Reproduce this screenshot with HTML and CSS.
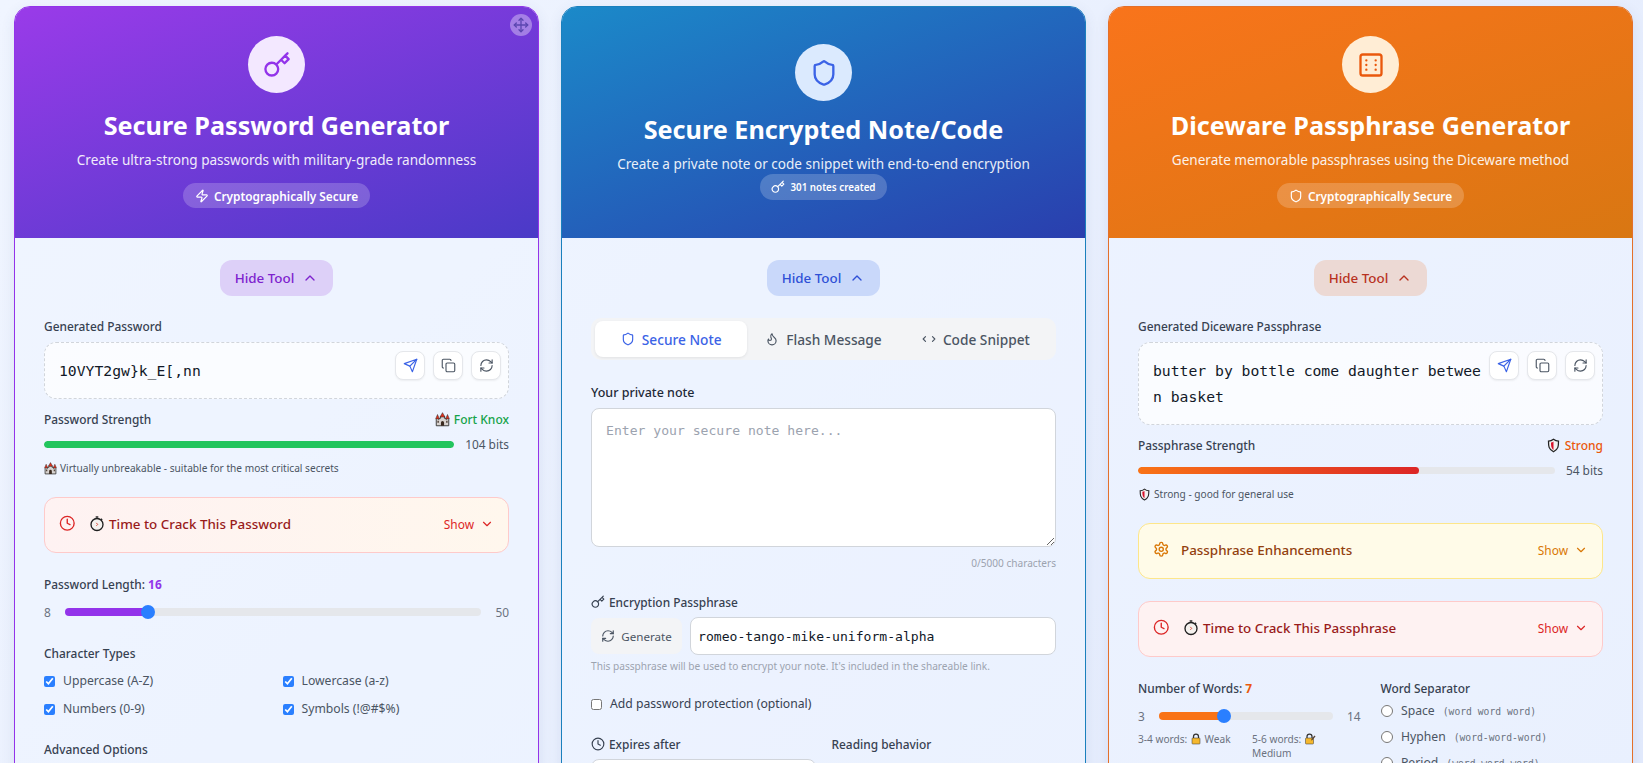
FILE: index.html
```html
<!DOCTYPE html>
<html lang="en">
  <head>
    <meta charset="UTF-8" />
    <meta name="viewport" content="width=device-width, initial-scale=1.0" />
    <title>Security Tools</title>
    <link rel="stylesheet" href="styles.css">
  </head>
  <body>
    <svg class="icon-sprite" aria-hidden="true">
      <symbol id="i-key" viewBox="0 0 24 24"><path d="m21 2-2 2m-7.61 7.61a5.5 5.5 0 1 1-7.778 7.778 5.5 5.5 0 0 1 7.777-7.777zm0 0L15.5 7.5m0 0 3 3L22 7l-3-3m-3.5 3.5L19 4"/></symbol>
      <symbol id="i-shield" viewBox="0 0 24 24"><path d="M20 13c0 5-3.5 7.5-7.66 8.95a1 1 0 0 1-.67-.01C7.5 20.5 4 18 4 13V6a1 1 0 0 1 1-1c2 0 4.5-1.2 6.24-2.72a1.17 1.17 0 0 1 1.52 0C14.51 3.81 17 5 19 5a1 1 0 0 1 1 1z"/></symbol>
      <symbol id="i-zap" viewBox="0 0 24 24"><path d="M4 14a1 1 0 0 1-.78-1.63l9.9-10.2a.5.5 0 0 1 .86.46l-1.92 6.02A1 1 0 0 0 13 10h7a1 1 0 0 1 .78 1.63l-9.9 10.2a.5.5 0 0 1-.86-.46l1.92-6.02A1 1 0 0 0 11 14z"/></symbol>
      <symbol id="i-dice" viewBox="0 0 24 24"><rect width="18" height="18" x="3" y="3" rx="2"/><path d="M16 8h.01M16 12h.01M16 16h.01M8 8h.01M8 12h.01M8 16h.01"/></symbol>
      <symbol id="i-move" viewBox="0 0 24 24"><polyline points="5 9 2 12 5 15"/><polyline points="9 5 12 2 15 5"/><polyline points="15 19 12 22 9 19"/><polyline points="19 9 22 12 19 15"/><line x1="2" x2="22" y1="12" y2="12"/><line x1="12" x2="12" y1="2" y2="22"/></symbol>
      <symbol id="i-send" viewBox="0 0 24 24"><path d="m22 2-7 20-4-9-9-4z"/><path d="M22 2 11 13"/></symbol>
      <symbol id="i-copy" viewBox="0 0 24 24"><rect width="14" height="14" x="8" y="8" rx="2"/><path d="M4 16c-1.1 0-2-.9-2-2V4c0-1.1.9-2 2-2h10c1.1 0 2 .9 2 2"/></symbol>
      <symbol id="i-refresh" viewBox="0 0 24 24"><path d="M3 12a9 9 0 0 1 9-9 9.75 9.75 0 0 1 6.74 2.74L21 8"/><path d="M21 3v5h-5"/><path d="M21 12a9 9 0 0 1-9 9 9.75 9.75 0 0 1-6.74-2.74L3 16"/><path d="M8 16H3v5"/></symbol>
      <symbol id="i-clock" viewBox="0 0 24 24"><circle cx="12" cy="12" r="10"/><polyline points="12 6 12 12 16 14"/></symbol>
      <symbol id="i-up" viewBox="0 0 24 24"><path d="m18 15-6-6-6 6"/></symbol>
      <symbol id="i-down" viewBox="0 0 24 24"><path d="m6 9 6 6 6-6"/></symbol>
      <symbol id="i-flame" viewBox="0 0 24 24"><path d="M8.5 14.5A2.5 2.5 0 0 0 11 12c0-1.38-.5-2-1-3-1.072-2.143-.224-4.054 2-6 .5 2.5 2 4.9 4 6.5 2 1.6 3 3.5 3 5.5a7 7 0 1 1-14 0c0-1.153.433-2.294 1-3a2.5 2.5 0 0 0 2.5 2.5z"/></symbol>
      <symbol id="i-code" viewBox="0 0 24 24"><path d="m18 16 4-4-4-4"/><path d="m6 8-4 4 4 4"/></symbol>
      <symbol id="i-gear" viewBox="0 0 24 24"><path d="M12.22 2h-.44a2 2 0 0 0-2 2v.18a2 2 0 0 1-1 1.73l-.43.25a2 2 0 0 1-2 0l-.15-.08a2 2 0 0 0-2.73.73l-.22.38a2 2 0 0 0 .73 2.73l.15.1a2 2 0 0 1 1 1.72v.51a2 2 0 0 1-1 1.74l-.15.09a2 2 0 0 0-.73 2.73l.22.38a2 2 0 0 0 2.73.73l.15-.08a2 2 0 0 1 2 0l.43.25a2 2 0 0 1 1 1.73V20a2 2 0 0 0 2 2h.44a2 2 0 0 0 2-2v-.18a2 2 0 0 1 1-1.73l.43-.25a2 2 0 0 1 2 0l.15.08a2 2 0 0 0 2.73-.73l.22-.39a2 2 0 0 0-.73-2.73l-.15-.08a2 2 0 0 1-1-1.74v-.5a2 2 0 0 1 1-1.74l.15-.09a2 2 0 0 0 .73-2.73l-.22-.38a2 2 0 0 0-2.73-.73l-.15.08a2 2 0 0 1-2 0l-.43-.25a2 2 0 0 1-1-1.73V4a2 2 0 0 0-2-2z"/><circle cx="12" cy="12" r="3"/></symbol>

      <!-- emoji have no font here, so they are small drawings -->
      <symbol id="e-castle" viewBox="0 0 24 24">
        <path fill="#d8d3d0" stroke="#2b2b2b" stroke-width="1.4" d="M2 22V12l2-2 2 2v-2h3V7h6v3h3v2l2-2 2 2v10z"/>
        <path fill="#e0301c" stroke="#2b2b2b" stroke-width=".8" d="M12 1l4 7H8zM4 4l3 7H1zM20 4l3 7h-6z"/>
        <path fill="#3a2a20" d="M9.5 22v-5a2.5 2.5 0 0 1 5 0v5zM4 14h2v3H4zM18 14h2v3h-2z"/>
      </symbol>
      <symbol id="e-watch" viewBox="0 0 24 24">
        <path fill="#2b2b2b" d="M10 1h4v2.5h-4zM18.5 4l2 2-1.5 1.5-2-2z"/>
        <circle cx="12" cy="13.5" r="9" fill="#f4f1ee" stroke="#1f1f1f" stroke-width="2"/>
        <path fill="none" stroke="#d8321e" stroke-width="1.3" d="M11 11l2 2.5-2 2"/>
      </symbol>
      <symbol id="e-shield" viewBox="0 0 24 24">
        <path fill="#f2f2f2" stroke="#222" stroke-width="2" d="M12 2c2.5 2 5 3 8 3 0 8 0 13-8 17C4 18 4 13 4 5c3 0 5.5-1 8-3z"/>
        <path fill="#d9122a" d="M8 7c1.5 0 3-.7 4-1.5V19c-3-2.5-4-5-4-12z"/>
      </symbol>
      <symbol id="e-lock" viewBox="0 0 24 24">
        <path fill="none" stroke="#333" stroke-width="2.5" d="M7 11V7a5 5 0 0 1 10 0v4"/>
        <rect x="4" y="10" width="16" height="12" rx="1.5" fill="#f5b82e" stroke="#333"/>
      </symbol>
      <symbol id="e-lockpen" viewBox="0 0 24 24">
        <path fill="none" stroke="#333" stroke-width="2.5" d="M6 11V7a5 5 0 0 1 10 0v4"/>
        <rect x="3" y="10" width="16" height="12" rx="1.5" fill="#f5b82e" stroke="#333"/>
        <path fill="#5b4636" d="M15 12l6-7 2 2-6 7-3 1z"/>
      </symbol>
    </svg>

    <main class="tools">
      <!-- password generator -->
      <section class="tool tool-purple">
        <header class="tool-head">
          <span class="move-handle"><svg class="icon"><use href="#i-move"/></svg></span>
          <span class="head-icon"><svg class="icon"><use href="#i-key"/></svg></span>
          <h2>Secure Password Generator</h2>
          <p>Create ultra-strong passwords with military-grade randomness</p>
          <span class="head-badge spaced"><svg class="icon"><use href="#i-zap"/></svg>Cryptographically Secure</span>
        </header>
        <div class="tool-body">
          <button class="hide-btn">Hide Tool <svg class="icon"><use href="#i-up"/></svg></button>

          <label class="field-label">Generated Password</label>
          <div class="output-box">
            <span class="output-text">10VYT2gw}k_E[,nn</span>
            <div class="output-actions">
              <button class="square-btn send"><svg class="icon"><use href="#i-send"/></svg></button>
              <button class="square-btn"><svg class="icon"><use href="#i-copy"/></svg></button>
              <button class="square-btn"><svg class="icon"><use href="#i-refresh"/></svg></button>
            </div>
          </div>

          <div class="strength-row">
            <span class="field-label">Password Strength</span>
            <span class="strength-name green"><svg class="emoji"><use href="#e-castle"/></svg>Fort Knox</span>
          </div>
          <div class="bar-row">
            <div class="bar"><div class="bar-fill fill-green" style="width: 100%"></div></div>
            <span>104 bits</span>
          </div>
          <p class="hint"><svg class="emoji"><use href="#e-castle"/></svg>Virtually unbreakable - suitable for the most critical secrets</p>

          <div class="fold fold-red">
            <svg class="icon fold-icon"><use href="#i-clock"/></svg>
            <svg class="emoji fold-emoji"><use href="#e-watch"/></svg>
            <strong>Time to Crack This Password</strong>
            <span class="fold-show">Show <svg class="icon"><use href="#i-down"/></svg></span>
          </div>

          <label class="field-label length-label">Password Length: <b class="accent-purple">16</b></label>
          <div class="slider-row">
            <span>8</span>
            <input type="range" class="range range-purple" min="8" max="50" value="16" style="--pct: 20%" />
            <span>50</span>
          </div>

          <label class="field-label types-label">Character Types</label>
          <div class="check-grid">
            <label class="check"><input type="checkbox" checked />Uppercase (A-Z)</label>
            <label class="check"><input type="checkbox" checked />Lowercase (a-z)</label>
            <label class="check"><input type="checkbox" checked />Numbers (0-9)</label>
            <label class="check"><input type="checkbox" checked />Symbols (!@#$%)</label>
          </div>

          <label class="field-label advanced-label">Advanced Options</label>
        </div>
      </section>

      <!-- encrypted note -->
      <section class="tool tool-blue">
        <header class="tool-head">
          <span class="head-icon"><svg class="icon"><use href="#i-shield"/></svg></span>
          <h2>Secure Encrypted Note/Code</h2>
          <p>Create a private note or code snippet with end-to-end encryption</p>
          <span class="head-badge small"><svg class="icon"><use href="#i-key"/></svg>301 notes created</span>
        </header>
        <div class="tool-body">
          <button class="hide-btn">Hide Tool <svg class="icon"><use href="#i-up"/></svg></button>

          <div class="tabs">
            <button class="tab active"><svg class="icon"><use href="#i-shield"/></svg>Secure Note</button>
            <button class="tab"><svg class="icon"><use href="#i-flame"/></svg>Flash Message</button>
            <button class="tab"><svg class="icon"><use href="#i-code"/></svg>Code Snippet</button>
          </div>

          <label class="field-label strong">Your private note</label>
          <textarea class="note-input" placeholder="Enter your secure note here..."></textarea>
          <div class="char-count">0/5000 characters</div>

          <label class="field-label icon-label"><svg class="icon"><use href="#i-key"/></svg>Encryption Passphrase</label>
          <div class="pass-row">
            <button class="generate-btn"><svg class="icon"><use href="#i-refresh"/></svg>Generate</button>
            <input class="pass-input" type="text" value="romeo-tango-mike-uniform-alpha" />
          </div>
          <p class="help">This passphrase will be used to encrypt your note. It's included in the shareable link.</p>

          <label class="check protect"><input type="checkbox" />Add password protection (optional)</label>

          <div class="two-col note-options">
            <div>
              <label class="field-label icon-label"><svg class="icon"><use href="#i-clock"/></svg>Expires after</label>
              <select class="expires"><option>24 hours</option></select>
            </div>
            <div>
              <label class="field-label icon-label">Reading behavior</label>
              <label class="radio reading"><input type="radio" name="reading" checked />Burn after reading</label>
            </div>
          </div>
        </div>
      </section>

      <!-- diceware -->
      <section class="tool tool-orange">
        <header class="tool-head">
          <span class="head-icon"><svg class="icon"><use href="#i-dice"/></svg></span>
          <h2>Diceware Passphrase Generator</h2>
          <p>Generate memorable passphrases using the Diceware method</p>
          <span class="head-badge spaced"><svg class="icon"><use href="#i-shield"/></svg>Cryptographically Secure</span>
        </header>
        <div class="tool-body">
          <button class="hide-btn">Hide Tool <svg class="icon"><use href="#i-up"/></svg></button>

          <label class="field-label">Generated Diceware Passphrase</label>
          <div class="output-box">
            <span class="output-text">butter by bottle come daughter between basket</span>
            <div class="output-actions">
              <button class="square-btn send"><svg class="icon"><use href="#i-send"/></svg></button>
              <button class="square-btn"><svg class="icon"><use href="#i-copy"/></svg></button>
              <button class="square-btn"><svg class="icon"><use href="#i-refresh"/></svg></button>
            </div>
          </div>

          <div class="strength-row">
            <span class="field-label">Passphrase Strength</span>
            <span class="strength-name orange"><svg class="emoji"><use href="#e-shield"/></svg>Strong</span>
          </div>
          <div class="bar-row">
            <div class="bar"><div class="bar-fill fill-orange" style="width: 67.5%"></div></div>
            <span>54 bits</span>
          </div>
          <p class="hint"><svg class="emoji"><use href="#e-shield"/></svg>Strong - good for general use</p>

          <div class="fold fold-yellow">
            <svg class="icon fold-icon"><use href="#i-gear"/></svg>
            <strong>Passphrase Enhancements</strong>
            <span class="fold-show">Show <svg class="icon"><use href="#i-down"/></svg></span>
          </div>

          <div class="fold fold-red fold-plain">
            <svg class="icon fold-icon"><use href="#i-clock"/></svg>
            <svg class="emoji fold-emoji"><use href="#e-watch"/></svg>
            <strong>Time to Crack This Passphrase</strong>
            <span class="fold-show">Show <svg class="icon"><use href="#i-down"/></svg></span>
          </div>

          <div class="two-col words-options">
            <div>
              <label class="field-label">Number of Words: <b class="accent-orange">7</b></label>
              <div class="slider-row">
                <span>3</span>
                <input type="range" class="range range-orange" min="3" max="14" value="7" style="--pct: 36%" />
                <span>14</span>
              </div>
              <div class="word-notes">
                <span>3-4 words: <svg class="emoji"><use href="#e-lock"/></svg> Weak</span>
                <span>5-6 words: <svg class="emoji"><use href="#e-lockpen"/></svg> Medium</span>
              </div>
            </div>
            <div>
              <label class="field-label">Word Separator</label>
              <div class="radio-list">
                <label class="radio"><input type="radio" name="sep" />Space <code>(word word word)</code></label>
                <label class="radio"><input type="radio" name="sep" />Hyphen <code>(word-word-word)</code></label>
                <label class="radio"><input type="radio" name="sep" />Period <code>(word.word.word)</code></label>
              </div>
            </div>
          </div>
        </div>
      </section>
    </main>
  </body>
</html>
```

FILE: styles.css
```css
* {
  box-sizing: border-box;
  margin: 0;
  padding: 0;
}

html,
body {
  height: 100%;
  overflow: hidden;
}

body {
  font-family: "Noto Sans", "Open Sans", sans-serif;
  font-size: 13px;
  color: #374151;
  background: linear-gradient(135deg, #f0f5ff, #e3ebfd);
}

.icon-sprite {
  display: none;
}

.icon {
  width: 16px;
  height: 16px;
  fill: none;
  stroke: currentColor;
  stroke-width: 2;
  stroke-linecap: round;
  stroke-linejoin: round;
  flex: none;
}

.emoji {
  width: 15px;
  height: 15px;
  flex: none;
}

/* Layout */
.tools {
  display: grid;
  grid-template-columns: repeat(3, 525px);
  gap: 22px;
  padding: 6px 10px 0 14px;
  align-items: start;
}

.tool {
  border: 1px solid var(--main);
  border-radius: 16px;
  overflow: hidden;
  background: rgba(240, 245, 255, 0.5);
  box-shadow: 0 4px 14px rgba(60, 80, 140, 0.1);
}

.tool-purple {
  --main: #9333ea;
  --head: linear-gradient(160deg, #9a3be9, #4a3ac7);
  --head-icon-bg: #f3e8ff;
  --head-icon-fg: #9333ea;
  --hide-bg: #ddd0f8;
  --hide-fg: #7e22ce;
}

.tool-blue {
  --main: #1a80bd;
  --head: linear-gradient(160deg, #1b8ac9, #2a3eae);
  --head-icon-bg: #dbeafe;
  --head-icon-fg: #3b63e6;
  --hide-bg: #c9d8fa;
  --hide-fg: #2f50d6;
}

.tool-orange {
  --main: #e4702a;
  --head: linear-gradient(160deg, #f9741b, #d97712);
  --head-icon-bg: #ffedd5;
  --head-icon-fg: #ea580c;
  --hide-bg: #ecd9d4;
  --hide-fg: #b8321f;
}

/* Header */
.tool-head {
  position: relative;
  height: 232px;
  margin: -1px -1px 0;
  background: var(--head);
  color: #fff;
  display: flex;
  flex-direction: column;
  align-items: center;
  justify-content: center;
  text-align: center;
}

.head-icon {
  width: 57px;
  height: 57px;
  border-radius: 50%;
  background: var(--head-icon-bg);
  color: var(--head-icon-fg);
  display: flex;
  align-items: center;
  justify-content: center;
}

.head-icon .icon {
  width: 28px;
  height: 28px;
}

.tool-head h2 {
  font-size: 25.2px;
  line-height: 36px;
  font-weight: 700;
  margin-top: 14px;
}

.tool-blue .tool-head h2 {
  margin-top: 10px;
}

.tool-head p {
  font-size: 13.55px;
  line-height: 20px;
  margin-top: 7px;
  opacity: 0.9;
}

.head-badge {
  display: inline-flex;
  align-items: center;
  gap: 5px;
  height: 25px;
  padding: 0 12px;
  border-radius: 13px;
  background: rgba(255, 255, 255, 0.2);
  font-size: 11.85px;
  font-weight: 600;
}

.head-badge .icon {
  width: 14px;
  height: 14px;
}

.head-badge.spaced {
  margin-top: 13px;
}

.head-badge.small {
  font-size: 9.8px;
  height: 26px;
  padding: 0 11px;
}

.move-handle {
  position: absolute;
  top: 8px;
  right: 7px;
  width: 22px;
  height: 22px;
  border-radius: 50%;
  background: rgba(255, 255, 255, 0.35);
  color: #5b46b0;
  display: flex;
  align-items: center;
  justify-content: center;
}

/* Body */
.tool-body {
  padding: 22px 29px 40px;
  display: flex;
  flex-direction: column;
}

.hide-btn {
  align-self: center;
  width: 113px;
  height: 36px;
  border: none;
  border-radius: 12px;
  background: var(--hide-bg);
  color: var(--hide-fg);
  font: 500 13.4px "Noto Sans", sans-serif;
  display: flex;
  align-items: center;
  justify-content: center;
  gap: 8px;
  margin-bottom: 21px;
}

.field-label {
  display: block;
  font-size: 11.9px;
  line-height: 18px;
  font-weight: 500;
  color: #374151;
}

.field-label.strong {
  font-size: 12.5px;
  color: #1f2937;
}

.output-box {
  position: relative;
  margin-top: 7px;
  min-height: 57px;
  padding: 15px 118px 14px 14px;
  border: 1px dashed #d1d5db;
  border-radius: 12px;
  background: rgba(255, 255, 255, 0.72);
  font: 14.73px/26px "DejaVu Sans Mono", monospace;
  color: #111827;
  word-break: break-all;
}

.output-actions {
  position: absolute;
  top: 8px;
  right: 7px;
  display: flex;
  gap: 8px;
}

.square-btn {
  width: 30px;
  height: 29px;
  border: 1px solid #e5e7eb;
  border-radius: 8px;
  background: #fff;
  color: #4b5563;
  display: flex;
  align-items: center;
  justify-content: center;
  box-shadow: 0 1px 2px rgba(0, 0, 0, 0.06);
}

.square-btn .icon {
  width: 15px;
  height: 15px;
  stroke-width: 1.8;
}

.square-btn.send {
  color: #3b63e6;
}

.strength-row {
  display: flex;
  justify-content: space-between;
  align-items: center;
  margin-top: 11px;
}

.strength-name {
  display: flex;
  align-items: center;
  gap: 4px;
  font-size: 12px;
  font-weight: 500;
}

.green {
  color: #16a34a;
}

.orange {
  color: #ea580c;
}

.bar-row {
  display: flex;
  align-items: center;
  justify-content: space-between;
  gap: 11px;
  margin-top: 7px;
  color: #4b5563;
  font-size: 11.9px;
  line-height: 18px;
}

.bar {
  flex: 1;
  height: 7px;
  border-radius: 4px;
  background: #e5e7eb;
  overflow: hidden;
}

.bar-fill {
  height: 100%;
  border-radius: 4px;
}

.fill-green {
  background: #22c55e;
}

.fill-orange {
  background: linear-gradient(to right, #f97316, #dc2626);
}

.hint {
  display: flex;
  align-items: center;
  gap: 3px;
  margin-top: 7px;
  font-size: 10.15px;
  line-height: 16px;
  color: #4b5563;
}

.hint .emoji {
  width: 13px;
  height: 13px;
}

.fold {
  display: flex;
  align-items: center;
  height: 56px;
  padding: 0 14px 3px 14px;
  border-radius: 12px;
  margin-top: 21px;
  font-size: 13.4px;
}

.fold strong {
  font-weight: 500;
}

.fold-icon {
  width: 16.5px;
  height: 16.5px;
  margin-right: 13px;
}

.fold-emoji {
  width: 16px;
  height: 17px;
  margin-right: 4.5px;
}

.fold-show {
  margin-left: auto;
  display: flex;
  align-items: center;
  gap: 6px;
  font-size: 11.9px;
}

.fold-show .icon {
  width: 14px;
  height: 14px;
}

.fold-red {
  border: 1px solid #fecaca;
  background: linear-gradient(to right, #fef2f2, #fff7ed);
  color: #991b1b;
}

.fold-plain {
  background: #fef2f2;
  margin-top: 22px;
}

.fold-red .fold-icon,
.fold-red .fold-show {
  color: #dc2626;
}

.fold-yellow {
  border: 1px solid #fde68a;
  background: #fffbe8;
  color: #92400e;
}

.fold-yellow .fold-icon,
.fold-yellow .fold-show {
  color: #d97706;
}

.fold-yellow .fold-icon {
  margin-right: 11.5px;
}

.length-label {
  margin-top: 22px;
}

.accent-purple {
  color: #9333ea;
}

.accent-orange {
  color: #ea580c;
}

.slider-row {
  display: flex;
  align-items: center;
  gap: 14px;
  margin-top: 10px;
  color: #6b7280;
  font-size: 11.9px;
  line-height: 18px;
}

.slider-row span {
  flex: none;
}

.range {
  flex: 1;
  min-width: 0;
  appearance: none;
  height: 8px;
  border-radius: 4px;
  background: linear-gradient(to right, var(--fill) var(--pct), #e5e7eb var(--pct));
}

.range-purple {
  --fill: #9333ea;
}

.range-orange {
  --fill: #f97316;
}

.range::-webkit-slider-thumb {
  appearance: none;
  width: 14px;
  height: 14px;
  border-radius: 50%;
  background: #2a7fff;
}

.types-label {
  margin-top: 23px;
}

.check-grid {
  display: grid;
  grid-template-columns: 1fr 1fr;
  row-gap: 10px;
  column-gap: 12px;
  margin-top: 10px;
}

.check {
  display: flex;
  align-items: center;
  gap: 8px;
  font-size: 12.2px;
  line-height: 18px;
  color: #4b5563;
}

.check input {
  width: 11px;
  height: 11px;
  accent-color: #2a7fff;
}

.advanced-label {
  margin-top: 22px;
}

/* Tabs */
.tabs {
  display: flex;
  height: 42px;
  padding: 3px 4px;
  border-radius: 10px;
  background: #f3f4f6;
  margin-top: 1px;
  margin-bottom: 24px;
}

.tab {
  flex: 1;
  display: flex;
  align-items: center;
  justify-content: center;
  gap: 7px;
  border: none;
  border-radius: 8px;
  background: transparent;
  color: #4b5563;
  font: 500 13.7px "Noto Sans", sans-serif;
}

.tab.active {
  background: #fff;
  color: #3b63e6;
  box-shadow: 0 1px 3px rgba(0, 0, 0, 0.08);
}

.tab .icon {
  width: 14px;
  height: 14px;
}

.note-input {
  display: block;
  width: 100%;
  height: 139px;
  margin-top: 6px;
  padding: 14px;
  border: 1px solid #d1d5db;
  border-radius: 8px;
  background: #fff;
  font: 13.1px "DejaVu Sans Mono", monospace;
}

.note-input::placeholder {
  color: #9ca3af;
}

.char-count {
  text-align: right;
  margin-top: 8px;
  font-size: 10.1px;
  line-height: 16px;
  color: #9ca3af;
}

.icon-label {
  display: flex;
  align-items: center;
  gap: 4px;
  margin-top: 22px;
}

.icon-label .icon {
  width: 14px;
  height: 14px;
}

.pass-row {
  display: flex;
  align-items: center;
  gap: 8px;
  margin-top: 6px;
}

.generate-btn {
  width: 91px;
  height: 36px;
  border: none;
  border-radius: 8px;
  background: #f3f4f6;
  color: #4b5563;
  font: 11.6px "Noto Sans", sans-serif;
  display: flex;
  align-items: center;
  justify-content: center;
  gap: 6px;
  flex: none;
}

.generate-btn .icon {
  width: 14px;
  height: 14px;
}

.pass-input {
  flex: 1;
  min-width: 0;
  height: 38px;
  padding: 0 7px;
  border: 1px solid #d1d5db;
  border-radius: 8px;
  background: #fff;
  color: #111827;
  font: 13.1px "DejaVu Sans Mono", monospace;
}

.help {
  margin-top: 3px;
  font-size: 10.13px;
  line-height: 16px;
  color: #9ca3af;
}

.protect {
  margin-top: 21px;
  color: #374151;
}

.two-col {
  display: grid;
  grid-template-columns: 1fr 1fr;
  column-gap: 16px;
}

.expires {
  display: block;
  width: 100%;
  height: 38px;
  margin-top: 6px;
  padding: 0 12px;
  border: 1px solid #d1d5db;
  border-radius: 8px;
  background: #fff;
  font: 13px "Noto Sans", sans-serif;
}

.radio {
  display: flex;
  align-items: center;
  gap: 8px;
  font-size: 12.2px;
  line-height: 18px;
  color: #4b5563;
}

.radio input {
  width: 12.5px;
  height: 12.5px;
  accent-color: #2a7fff;
}

/* only the top of this radio shows above the fold */
.reading {
  margin-top: 13px;
  align-items: flex-start;
}

.reading input {
  margin-top: -3px;
}

.radio code {
  font: 9.7px "DejaVu Sans Mono", monospace;
  color: #6b7280;
}

.radio-list {
  display: flex;
  flex-direction: column;
  gap: 8px;
  margin-top: 5px;
}

.words-options {
  margin-top: 22px;
  column-gap: 20px;
}

.word-notes {
  display: grid;
  grid-template-columns: 108px 86px;
  column-gap: 6px;
  margin-top: 7px;
  font-size: 10.15px;
  line-height: 14px;
  color: #6b7280;
}

.word-notes .emoji {
  width: 12px;
  height: 12px;
  vertical-align: -2px;
}
```
